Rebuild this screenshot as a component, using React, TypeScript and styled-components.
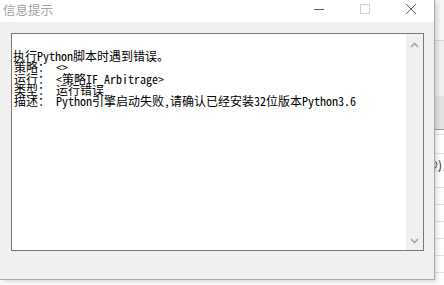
import React from 'react';
import styled, { createGlobalStyle } from 'styled-components';

const GlobalStyle = createGlobalStyle`
  html, body {
    margin: 0;
    padding: 0;
    width: 444px;
    height: 285px;
    overflow: hidden;
    background: #ffffff;
  }
  #root {
    position: relative;
    width: 444px;
    height: 285px;
    overflow: hidden;
  }
`;

// what sits behind the dialog (only a sliver of it shows)
const Backdrop = styled.div`
  display: flex;
  flex-direction: column;
  width: 444px;
  height: 285px;
`;

const Band = styled.div<{ $h: number; $bg: string; $line?: string }>`
  height: ${(p) => p.$h}px;
  flex: none;
  background: ${(p) => p.$bg};
  border-bottom: ${(p) => (p.$line ? `1px solid ${p.$line}` : 'none')};
`;

const Grid = styled.div`
  flex: 1;
  display: flex;
  justify-content: flex-end;
  align-items: flex-start;
  padding-top: 26px;
  background:
    repeating-linear-gradient(
      to bottom,
      transparent 0,
      transparent 16px,
      #e2e2e2 16px,
      #e2e2e2 17px
    ),
    #ffffff;
  background-position: 0 7px;
`;

const GridLabel = styled.span`
  font-family: 'Noto Sans CJK SC', sans-serif;
  font-size: 12px;
  color: #222;
  padding-right: 2px;
`;

const Window = styled.div`
  position: absolute;
  left: 0;
  top: 0;
  width: 434px;
  height: 279px;
  display: flex;
  flex-direction: column;
  background: #f0f0f0;
  border-right: 1px solid #a9a9a9;
  border-bottom: 1px solid #a9a9a9;
  box-shadow: 2px 2px 5px rgba(0, 0, 0, 0.16);
`;

const TitleBar = styled.div`
  height: 22px;
  flex: none;
  display: flex;
  background: #ffffff;
`;

const Title = styled.div`
  flex: 1;
  padding: 3px 0 0 3px;
  font-family: 'Noto Sans CJK SC', sans-serif;
  font-size: 12.5px;
  line-height: 14px;
  color: #a3a3a3;
`;

const CaptionButton = styled.div`
  width: 46px;
  height: 22px;
  display: flex;
  justify-content: center;
  padding-top: 4px;
  box-sizing: border-box;
`;

const Body = styled.div`
  flex: 1;
  display: flex;
  padding: 11px 10px 28px 11px;
`;

const TextBox = styled.div`
  flex: 1;
  display: flex;
  background: #ffffff;
  border: 1px solid #7a7a7a;
`;

const Content = styled.div`
  flex: 1;
  padding: 16px 0 0 1px;
`;

const Line = styled.div<{ $indent?: boolean }>`
  padding-left: ${(p) => (p.$indent ? 1 : 0)}px;
  font-family: 'Noto Sans Mono CJK SC', 'Noto Sans CJK SC', monospace;
  font-size: 12px;
  line-height: 11.33px;
  color: #000000;
  white-space: pre;
`;

const ScrollBar = styled.div`
  width: 17px;
  flex: none;
  display: flex;
  flex-direction: column;
  justify-content: space-between;
  align-items: center;
  padding: 8px 0 6px;
  background: #f0f0f0;
`;

const Chevron = ({ down }: { down?: boolean }) => (
  <svg width="9" height="6" viewBox="0 0 9 6">
    <path
      d={down ? 'M1 1 L4.5 4.5 L8 1' : 'M1 5 L4.5 1.5 L8 5'}
      fill="none"
      stroke="#a6a6a6"
      strokeWidth="1.6"
    />
  </svg>
);

const lines = [
  '执行Python脚本时遇到错误。',
  '策略： <>',
  '运行： <策略IF_Arbitrage>',
  '类型： 运行错误',
  '描述： Python引擎启动失败,请确认已经安装32位版本Python3.6',
];

export default function App() {
  return (
    <>
      <GlobalStyle />
      <Backdrop>
        <Band $h={40} $bg="#f6f6f6" $line="#d6d6d6" />
        <Band $h={55} $bg="#f0f0f0" />
        <Band $h={33} $bg="#e3e3e3" $line="#9c9c9c" />
        <Grid>
          <GridLabel>秒)</GridLabel>
        </Grid>
      </Backdrop>

      <Window>
        <TitleBar>
          <Title>信息提示</Title>
          <CaptionButton>
            <svg width="10" height="10" viewBox="0 0 10 10">
              <line x1="0" y1="5.5" x2="10" y2="5.5" stroke="#5c5c5c" strokeWidth="1" />
            </svg>
          </CaptionButton>
          <CaptionButton>
            <svg width="10" height="10" viewBox="0 0 10 10">
              <rect x="0.5" y="0.5" width="9" height="9" fill="none" stroke="#d0d0d0" strokeWidth="1" />
            </svg>
          </CaptionButton>
          <CaptionButton>
            <svg width="10" height="10" viewBox="0 0 10 10">
              <path d="M0 0 L10 10 M10 0 L0 10" stroke="#5c5c5c" strokeWidth="1" />
            </svg>
          </CaptionButton>
        </TitleBar>

        <Body>
          <TextBox>
            <Content>
              {lines.map((l, i) => (
                <Line key={l} $indent={i > 0}>
                  {l}
                </Line>
              ))}
            </Content>
            <ScrollBar>
              <Chevron />
              <Chevron down />
            </ScrollBar>
          </TextBox>
        </Body>
      </Window>
    </>
  );
}
